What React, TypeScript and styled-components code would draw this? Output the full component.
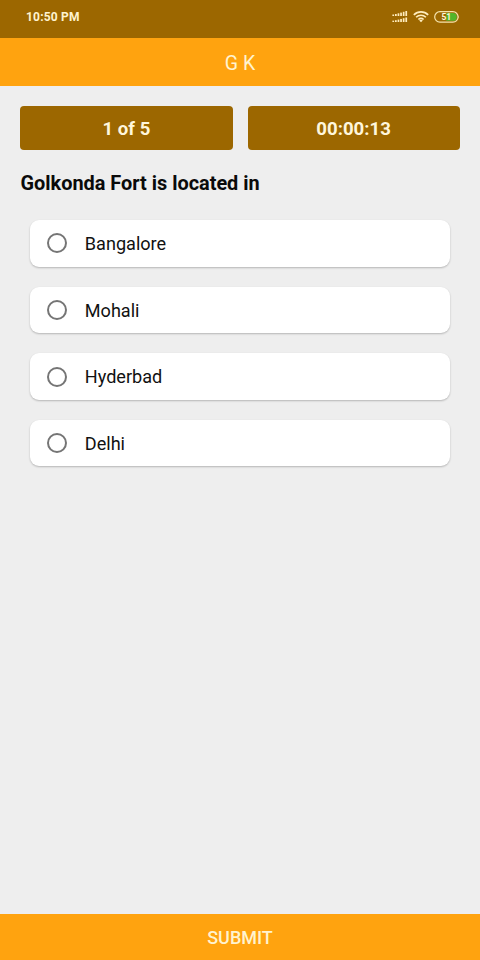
import React, { useState } from 'react';
import styled, { createGlobalStyle } from 'styled-components';

const GlobalStyle = createGlobalStyle`
  * { box-sizing: border-box; }
  body { margin: 0; background: #eeeeee; font-family: Roboto, "Liberation Sans", sans-serif; }
  button { font-family: inherit; border: 0; padding: 0; }
`;

const Screen = styled.div`
  display: flex;
  flex-direction: column;
  height: 960px;
  background: #eeeeee;
`;

const StatusBar = styled.div`
  display: flex;
  justify-content: space-between;
  height: 38px;
  padding: 9px 20px 0 26px;
  background: #9c6700;
`;

const Clock = styled.span`
  font-size: 12px;
  line-height: 17px;
  font-weight: 700;
  letter-spacing: 0.2px;
  color: #fff3cf;
`;

const StatusIcons = styled.div`
  display: flex;
  height: 15px;
  align-items: center;
`;

const Title = styled.header`
  display: flex;
  align-items: center;
  justify-content: center;
  height: 48px;
  padding-top: 2px;
  font-size: 19.5px;
  color: #fff3cf;
  background: #ffa30f;
`;

const Content = styled.main`
  flex: 1;
  padding: 20px 20px 0;
`;

const Stats = styled.div`
  display: grid;
  grid-template-columns: 1fr 1fr;
  gap: 15px;
  padding: 0 0.4px;
`;

const Stat = styled.div`
  display: flex;
  align-items: center;
  justify-content: center;
  height: 44px;
  padding-top: 1px;
  border-radius: 4px;
  font-size: 18.6px;
  font-weight: 700;
  color: #fff6dc;
  background: #9c6700;
`;

const Question = styled.h1`
  margin: 22px 0 0;
  padding-left: 0.5px;
  font-size: 19.9px;
  line-height: 24px;
  font-weight: 700;
  color: #0a0a0a;
`;

const Options = styled.div`
  display: flex;
  flex-direction: column;
  gap: 19.9px;
  padding: 24px 10.4px 0;
`;

const Option = styled.button`
  display: flex;
  align-items: center;
  gap: 18px;
  height: 46.7px;
  padding-left: 16.4px;
  border-radius: 9px;
  font-size: 18.1px;
  color: #111111;
  background: #ffffff;
  box-shadow: 0 1px 2px rgba(0, 0, 0, 0.24);
`;

const Radio = styled.span<{ $checked: boolean }>`
  width: 20px;
  height: 20px;
  border: 2px solid #757575;
  border-radius: 50%;
  background: ${({ $checked }) => ($checked ? '#757575' : 'transparent')};
  background-clip: content-box;
  padding: 3px;
`;

const OptionLabel = styled.span`
  padding-top: 0.4px;
`;

const Submit = styled.button`
  height: 46.5px;
  padding-top: 2px;
  font-size: 18px;
  font-weight: 500;
  color: #fff3cf;
  background: #ffa30f;
`;

const BatteryText = styled.text`
  font: 700 8.5px Roboto, sans-serif;
  fill: #fff6dc;
`;

const SIGNAL_BARS = [1.5, 2, 2.7, 3.4, 4.2, 5];

const SignalIcon = () => (
  <svg width="16" height="13" viewBox="0 0 16 13" fill="#ffedbd">
    {SIGNAL_BARS.map((h, i) => (
      <React.Fragment key={i}>
        <rect x={0.4 + i * 2.6} y={6 - h} width="1.7" height={h} />
        <rect x={0.4 + i * 2.6} y={12 - h * 0.9} width="1.7" height={h * 0.9} />
      </React.Fragment>
    ))}
  </svg>
);

const WifiIcon = () => (
  <svg width="16" height="13" viewBox="0 0 16 13" fill="none" stroke="#ffedbd" strokeWidth="1.6">
    <path d="M.8 4.9C4.9.8 11.1.8 15.2 4.9M3.1 7.3C5.9 4.5 10.1 4.5 12.9 7.3M5.4 9.5C6.9 8 9.1 8 10.6 9.5" />
    <path d="M8 12.2 6.2 10.5Q8 9 9.8 10.5Z" fill="#ffedbd" stroke="none" />
  </svg>
);

const BatteryIcon = () => (
  <svg width="26" height="12" viewBox="0 0 26 12">
    <rect x=".7" y=".7" width="23.4" height="10.4" rx="5.2" fill="none" stroke="#f5e3ac" strokeWidth="1.2" />
    <path d="M12.3 2h6.6a3.9 3.9 0 0 1 0 7.8h-6.6Z" fill="#52b52a" />
    <path d="M24.5 4.2q1.2 1.7 0 3.4Z" fill="#f5e3ac" />
    <BatteryText x="12.3" y="9" textAnchor="middle">51</BatteryText>
  </svg>
);

const IconSlot = styled.span<{ $gap?: number }>`
  display: flex;
  margin-left: ${({ $gap = 0 }) => $gap}px;
`;

const answers = ['Bangalore', 'Mohali', 'Hyderbad', 'Delhi'];

export default function App() {
  const [selected, setSelected] = useState<string | null>(null);

  return (
    <>
      <GlobalStyle />
      <Screen>
        <StatusBar>
          <Clock>10:50 PM</Clock>
          <StatusIcons>
            <IconSlot><SignalIcon /></IconSlot>
            <IconSlot $gap={5}><WifiIcon /></IconSlot>
            <IconSlot $gap={5}><BatteryIcon /></IconSlot>
          </StatusIcons>
        </StatusBar>
        <Title>G K</Title>
        <Content>
          <Stats>
            <Stat>1 of 5</Stat>
            <Stat>00:00:13</Stat>
          </Stats>
          <Question>Golkonda Fort is located in</Question>
          <Options>
            {answers.map((answer) => (
              <Option key={answer} onClick={() => setSelected(answer)}>
                <Radio $checked={selected === answer} />
                <OptionLabel>{answer}</OptionLabel>
              </Option>
            ))}
          </Options>
        </Content>
        <Submit>SUBMIT</Submit>
      </Screen>
    </>
  );
}
